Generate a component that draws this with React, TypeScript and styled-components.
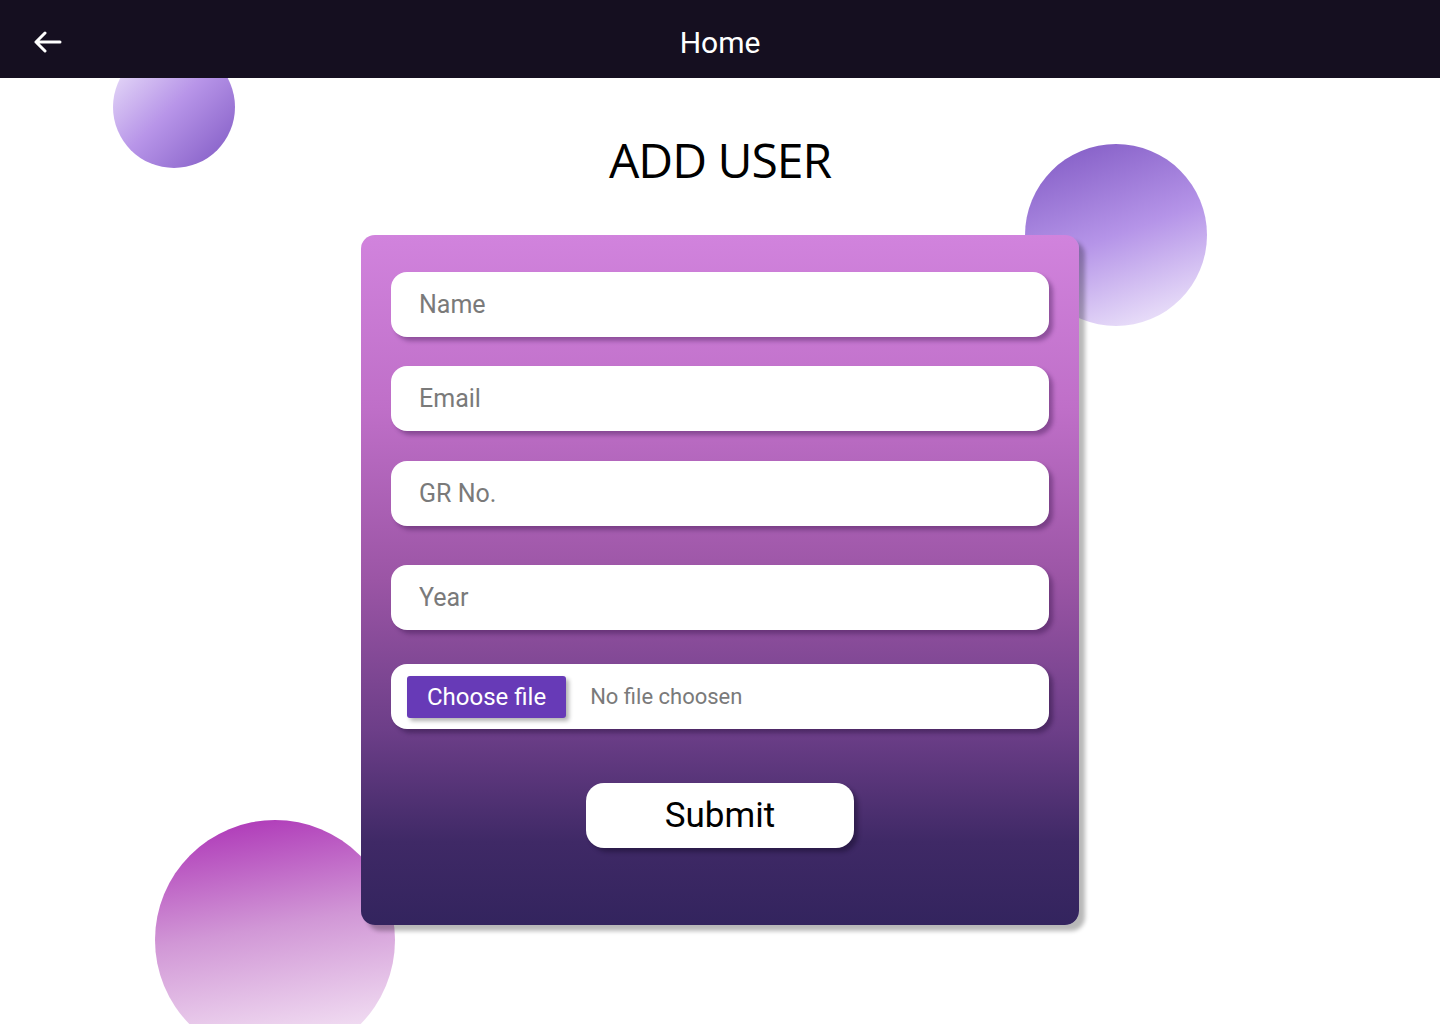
import React from "react";
import styled, { createGlobalStyle } from "styled-components";

const GlobalStyle = createGlobalStyle`
  html, body {
    margin: 0;
    padding: 0;
    background: #ffffff;
    font-family: Roboto, "Liberation Sans", sans-serif;
  }
  * {
    box-sizing: border-box;
  }
`;

const Page = styled.div`
  position: relative;
  height: 100vh;
  overflow: hidden;
  background: #ffffff;
`;

const Bubble = styled.div<{ $size: number; $top: number; $left: number; $bg: string }>`
  position: absolute;
  top: ${(p) => p.$top}px;
  left: ${(p) => p.$left}px;
  width: ${(p) => p.$size}px;
  height: ${(p) => p.$size}px;
  border-radius: 50%;
  background: ${(p) => p.$bg};
  z-index: 0;
`;

const Header = styled.header`
  position: relative;
  z-index: 2;
  height: 78px;
  background: #150f20;
  display: flex;
  align-items: center;
  justify-content: center;
  padding-top: 6px;
`;

const BackButton = styled.button`
  position: absolute;
  left: 33px;
  top: 31px;
  background: none;
  border: none;
  padding: 0;
  display: flex;
  cursor: pointer;
`;

const HeaderTitle = styled.h2`
  margin: 0;
  color: #ffffff;
  font-size: 30px;
  font-weight: 400;
  font-family: Roboto, sans-serif;
`;

const Main = styled.main`
  position: relative;
  z-index: 1;
  display: flex;
  flex-direction: column;
  align-items: center;
`;

const Title = styled.h1`
  margin: 52px 0 45px;
  font-family: "Open Sans", "Noto Sans", sans-serif;
  font-weight: 400;
  font-size: 48px;
  line-height: 60px;
  color: #000000;
  letter-spacing: -1px;
`;

const Card = styled.form`
  width: 718px;
  padding: 37px 30px 77px;
  border-radius: 14px;
  background: linear-gradient(180deg, #d183dd 0%, #bf6fc8 25%, #9b55a5 50%, #6c3e88 72%, #3f2966 88%, #33245e 100%);
  box-shadow: 6px 6px 4px rgba(0, 0, 0, 0.28);
  display: flex;
  flex-direction: column;
  align-items: center;
`;

const Field = styled.input<{ $gap: number }>`
  width: 100%;
  height: 65px;
  margin-top: ${(p) => p.$gap}px;
  border: none;
  outline: none;
  border-radius: 16px;
  background: #ffffff;
  padding: 0 28px;
  font-family: Roboto, sans-serif;
  font-size: 25px;
  color: #333;
  box-shadow: 4px 4px 4px rgba(40, 10, 60, 0.35);
  &::placeholder {
    color: #7a7a7a;
  }
`;

const FileRow = styled.label`
  width: 100%;
  height: 65px;
  margin-top: 34px;
  border-radius: 16px;
  background: #ffffff;
  display: flex;
  align-items: center;
  padding: 0 16px;
  gap: 24px;
  box-shadow: 4px 4px 4px rgba(30, 10, 50, 0.4);
  cursor: pointer;
`;

const ChooseButton = styled.span`
  height: 42px;
  padding: 0 20px;
  background: #673ab7;
  color: #ffffff;
  border-radius: 3px;
  display: flex;
  align-items: center;
  font-size: 24px;
  box-shadow: 3px 3px 4px rgba(0, 0, 0, 0.3);
`;

const FileName = styled.span`
  font-size: 22px;
  color: #7a7a7a;
`;

const HiddenInput = styled.input`
  display: none;
`;

const SubmitButton = styled.button`
  margin-top: 54px;
  width: 268px;
  height: 65px;
  border: none;
  border-radius: 18px;
  background: #ffffff;
  color: #000000;
  font-family: Roboto, sans-serif;
  font-size: 35px;
  box-shadow: 4px 4px 4px rgba(20, 10, 40, 0.45);
  cursor: pointer;
`;

const BackArrow = () => (
  <svg width="30" height="22" viewBox="0 0 30 22" fill="none">
    <path
      d="M3 11H27M12 2L3 11L12 20"
      stroke="#ffffff"
      strokeWidth="3"
      strokeLinecap="round"
      strokeLinejoin="round"
    />
  </svg>
);

const fields = [
  { placeholder: "Name", gap: 0 },
  { placeholder: "Email", gap: 29 },
  { placeholder: "GR No.", gap: 30 },
  { placeholder: "Year", gap: 39 },
];

const App = () => {
  return (
    <Page>
      <GlobalStyle />
      <Bubble
        $size={122}
        $top={46}
        $left={113}
        $bg="linear-gradient(135deg, #f1ebfc 0%, #b794e8 50%, #7e57c2 100%)"
      />
      <Bubble
        $size={182}
        $top={144}
        $left={1025}
        $bg="linear-gradient(160deg, #7e57c2 0%, #b594e8 50%, #f5f0fd 100%)"
      />
      <Bubble
        $size={240}
        $top={820}
        $left={155}
        $bg="linear-gradient(170deg, #ab2fb5 0%, #d197d6 45%, #fbf3fb 100%)"
      />
      <Header>
        <BackButton aria-label="Back">
          <BackArrow />
        </BackButton>
        <HeaderTitle>Home</HeaderTitle>
      </Header>
      <Main>
        <Title>ADD USER</Title>
        <Card onSubmit={(e) => e.preventDefault()}>
          {fields.map((f) => (
            <Field key={f.placeholder} $gap={f.gap} placeholder={f.placeholder} />
          ))}
          <FileRow>
            <ChooseButton>Choose file</ChooseButton>
            <FileName>No file choosen</FileName>
            <HiddenInput type="file" />
          </FileRow>
          <SubmitButton type="submit">Submit</SubmitButton>
        </Card>
      </Main>
    </Page>
  );
};

export default App;
